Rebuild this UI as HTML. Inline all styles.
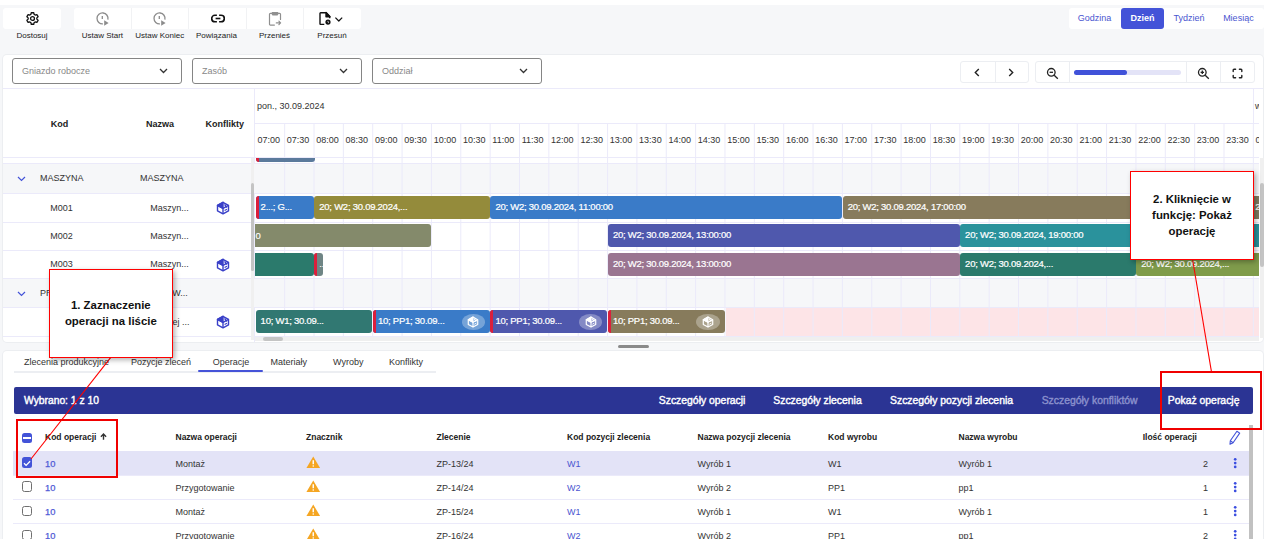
<!DOCTYPE html>
<html><head><meta charset="utf-8"><style>
html,body{margin:0;padding:0;}
body{width:1264px;height:552px;position:relative;overflow:hidden;background:#fff;font-family:'Liberation Sans', sans-serif;}
#bg{position:absolute;left:0;top:0;width:1264px;height:539px;background:#f6f7f9;}
</style></head><body><div id="bg"></div>
<div style="position:absolute;left:0px;top:0px;width:1264px;height:5px;background:#fff"></div>
<div style="position:absolute;left:3px;top:8px;width:58px;height:21px;background:#fff;border-radius:3px"></div>
<div style="position:absolute;left:74px;top:8px;width:287px;height:21px;background:#fff;border-radius:3px"></div>
<div style="position:absolute;left:130.5px;top:8px;width:1px;height:21px;background:#f1f2f4"></div>
<div style="position:absolute;left:187.5px;top:8px;width:1px;height:21px;background:#f1f2f4"></div>
<div style="position:absolute;left:245.5px;top:8px;width:1px;height:21px;background:#f1f2f4"></div>
<div style="position:absolute;left:302.5px;top:8px;width:1px;height:21px;background:#f1f2f4"></div>
<svg style="position:absolute;left:24.5px;top:10.5px" width="15" height="15" viewBox="0 0 24 24" fill="none" stroke="#111" stroke-width="2.1" stroke-linejoin="round">
<path d="M14.62 5.51 L13.95 2.81 L10.05 2.81 L9.38 5.51 L7.69 6.48 L5.01 5.71 L3.06 9.10 L5.07 11.03 L5.07 12.97 L3.06 14.90 L5.01 18.29 L7.69 17.52 L9.38 18.49 L10.05 21.19 L13.95 21.19 L14.62 18.49 L16.31 17.52 L18.99 18.29 L20.94 14.90 L18.93 12.97 L18.93 11.03 L20.94 9.10 L18.99 5.71 L16.31 6.48Z"/>
<circle cx="12" cy="12" r="3.1"/></svg>
<svg style="position:absolute;left:94.8px;top:11px" width="15" height="15" viewBox="0 0 15 15" fill="none" stroke="#8c8c8c" stroke-width="1.3">
<path d="M12.9 8.6A5.5 5.5 0 1 0 7.9 12.95"/><path d="M7.3 4.9v3.2"/><path d="M9.2 9.3l4.4 2.7-4.4 2.7z" fill="#8c8c8c" stroke="none"/></svg>
<svg style="position:absolute;left:152.0px;top:11px" width="15" height="15" viewBox="0 0 15 15" fill="none" stroke="#8c8c8c" stroke-width="1.3">
<path d="M12.9 8.6A5.5 5.5 0 1 0 7.9 12.95"/><path d="M7.3 4.9v3.2"/><path d="M9.2 9.3l4.4 2.7-4.4 2.7z" fill="#8c8c8c" stroke="none"/></svg>
<svg style="position:absolute;left:210.5px;top:13.6px" width="14" height="9" viewBox="0 0 14 9" fill="none" stroke="#111" stroke-width="1.6">
<path d="M5.9 1.3H3.9a3.2 3.2 0 0 0 0 6.4h2"/><path d="M8.1 1.3h2a3.2 3.2 0 0 1 0 6.4h-2"/><path d="M4.6 4.5h4.8"/></svg>
<svg style="position:absolute;left:268px;top:11px" width="14" height="15" viewBox="0 0 14 15" fill="none" stroke="#8f8f8f" stroke-width="1.2" stroke-linecap="round" stroke-linejoin="round">
<path d="M3.6 2.4H2.4a.9.9 0 0 0-.9.9v9.9a.9.9 0 0 0 .9.9h4"/><path d="M10.4 2.4h1.2a.9.9 0 0 1 .9.9v5.2"/><path d="M4.3 1.6h5.4v1.6a.8.8 0 0 1-.8.8H5.1a.8.8 0 0 1-.8-.8z" fill="#8f8f8f"/><path d="M8.3 11.9h4.2M10.9 10.2l1.7 1.7-1.7 1.7"/></svg>
<svg style="position:absolute;left:318px;top:11px" width="26" height="15" viewBox="0 0 26 15" fill="none" stroke="#111" stroke-width="1.4" stroke-linejoin="round">
<path d="M6.3 13.4H2.6a.6.6 0 0 1-.6-.6V2.4a.6.6 0 0 1 .6-.6h5.6l3.5 3.6v1.8"/><path d="M8 1.6v4.2h4z" fill="#111"/><circle cx="10" cy="11.1" r="2.6" fill="#111" stroke="none"/><path d="M10 9.9v1.3l.8.6" stroke="#fff" stroke-width="0.8"/><path d="M17.4 6.6l3.4 3.4 3.4-3.4" stroke-width="1.2"/></svg>
<div style="position:absolute;left:-168px;width:400px;text-align:center;top:30.0px;line-height:12px;font-size:8px;color:#222;font-weight:normal;white-space:nowrap;">Dostosuj</div>
<div style="position:absolute;left:-97.6px;width:400px;text-align:center;top:30.0px;line-height:12px;font-size:8px;color:#222;font-weight:normal;white-space:nowrap;">Ustaw Start</div>
<div style="position:absolute;left:-40.30000000000001px;width:400px;text-align:center;top:30.0px;line-height:12px;font-size:8px;color:#222;font-weight:normal;white-space:nowrap;">Ustaw Koniec</div>
<div style="position:absolute;left:16.5px;width:400px;text-align:center;top:30.0px;line-height:12px;font-size:8px;color:#222;font-weight:normal;white-space:nowrap;">Powiązania</div>
<div style="position:absolute;left:74.5px;width:400px;text-align:center;top:30.0px;line-height:12px;font-size:8px;color:#222;font-weight:normal;white-space:nowrap;">Przenieś</div>
<div style="position:absolute;left:132px;width:400px;text-align:center;top:30.0px;line-height:12px;font-size:8px;color:#222;font-weight:normal;white-space:nowrap;">Przesuń</div>
<div style="position:absolute;left:1069px;top:8px;width:195px;height:21px;background:#fff;border-radius:3px"></div>
<div style="position:absolute;left:1121px;top:8px;width:43px;height:21px;background:#4353d8;border-radius:3px"></div>
<div style="position:absolute;left:894.5px;width:400px;text-align:center;top:12.3px;line-height:12px;font-size:9px;color:#4a55d0;font-weight:normal;white-space:nowrap;">Godzina</div>
<div style="position:absolute;left:942.5px;width:400px;text-align:center;top:12.3px;line-height:12px;font-size:9px;color:#fff;font-weight:bold;white-space:nowrap;">Dzień</div>
<div style="position:absolute;left:989px;width:400px;text-align:center;top:12.3px;line-height:12px;font-size:9px;color:#4a55d0;font-weight:normal;white-space:nowrap;">Tydzień</div>
<div style="position:absolute;left:1038.4px;width:400px;text-align:center;top:12.3px;line-height:12px;font-size:9px;color:#4a55d0;font-weight:normal;white-space:nowrap;">Miesiąc</div>
<div style="position:absolute;left:3px;top:55px;width:1260px;height:287px;background:#fff;border-radius:4px;box-shadow:0 0 0 1px #eceef1"></div>
<div style="position:absolute;left:12px;top:58px;width:170px;height:26px;box-sizing:border-box;border:1px solid #858585;border-radius:3px"></div>
<div style="position:absolute;left:22px;top:65.2px;line-height:12px;font-size:9px;color:#888;font-weight:normal;white-space:nowrap;">Gniazdo robocze</div>
<svg style="position:absolute;left:159px;top:68px" width="9" height="6" viewBox="0 0 9 6" fill="none" stroke="#333" stroke-width="1.3"><path d="M1 1l3.5 3.5L8 1"/></svg>
<div style="position:absolute;left:192px;top:58px;width:170px;height:26px;box-sizing:border-box;border:1px solid #858585;border-radius:3px"></div>
<div style="position:absolute;left:202px;top:65.2px;line-height:12px;font-size:9px;color:#888;font-weight:normal;white-space:nowrap;">Zasób</div>
<svg style="position:absolute;left:339px;top:68px" width="9" height="6" viewBox="0 0 9 6" fill="none" stroke="#333" stroke-width="1.3"><path d="M1 1l3.5 3.5L8 1"/></svg>
<div style="position:absolute;left:372px;top:58px;width:170px;height:26px;box-sizing:border-box;border:1px solid #858585;border-radius:3px"></div>
<div style="position:absolute;left:382px;top:65.2px;line-height:12px;font-size:9px;color:#888;font-weight:normal;white-space:nowrap;">Oddział</div>
<svg style="position:absolute;left:519px;top:68px" width="9" height="6" viewBox="0 0 9 6" fill="none" stroke="#333" stroke-width="1.3"><path d="M1 1l3.5 3.5L8 1"/></svg>
<div style="position:absolute;left:960px;top:61.3px;width:69px;height:22px;box-sizing:border-box;border:1px solid #eceef2;border-radius:3px"></div>
<div style="position:absolute;left:994.5px;top:61.3px;width:1px;height:22px;background:#eceef2"></div>
<svg style="position:absolute;left:974px;top:68px" width="6" height="9" viewBox="0 0 6 9" fill="none" stroke="#222" stroke-width="1.4"><path d="M4.8 1L1.3 4.5 4.8 8"/></svg>
<svg style="position:absolute;left:1008px;top:68px" width="6" height="9" viewBox="0 0 6 9" fill="none" stroke="#222" stroke-width="1.4"><path d="M1.2 1l3.5 3.5L1.2 8"/></svg>
<div style="position:absolute;left:1034.5px;top:61.3px;width:220.5px;height:22px;box-sizing:border-box;border:1px solid #eceef2;border-radius:3px"></div>
<div style="position:absolute;left:1068.8px;top:61.3px;width:1px;height:22px;background:#eceef2"></div>
<div style="position:absolute;left:1186px;top:61.3px;width:1px;height:22px;background:#eceef2"></div>
<div style="position:absolute;left:1220px;top:61.3px;width:1px;height:22px;background:#eceef2"></div>
<div style="position:absolute;left:1074.2px;top:70.2px;width:107px;height:4.8px;background:#e3e3f7;border-radius:3px"></div>
<div style="position:absolute;left:1074.2px;top:70.2px;width:53px;height:4.8px;background:#4052d9;border-radius:3px"></div>
<svg style="position:absolute;left:1045.5px;top:66.5px" width="13" height="13" viewBox="0 0 13 13" fill="none" stroke="#222" stroke-width="1.3"><circle cx="5.3" cy="5.3" r="3.8"/><path d="M8.2 8.2l3.6 3.6"/><path d="M3.6 5.3h3.4"/></svg>
<svg style="position:absolute;left:1197px;top:66.5px" width="13" height="13" viewBox="0 0 13 13" fill="none" stroke="#222" stroke-width="1.3"><circle cx="5.3" cy="5.3" r="3.8"/><path d="M8.2 8.2l3.6 3.6"/><path d="M3.6 5.3h3.4M5.3 3.6v3.4"/></svg>
<svg style="position:absolute;left:1231.7px;top:68px" width="11" height="11" viewBox="0 0 11 11" fill="none" stroke="#222" stroke-width="1.4" stroke-linecap="round" stroke-linejoin="round"><path d="M1.2 3.6V2a.8.8 0 0 1 .8-.8h1.6M7.4 1.2H9a.8.8 0 0 1 .8.8v1.6M9.8 7.4V9a.8.8 0 0 1-.8.8H7.4M3.6 9.8H2a.8.8 0 0 1-.8-.8V7.4"/></svg>
<div style="position:absolute;left:3px;top:88px;width:1260px;height:1px;background:#ebeafa"></div>
<div style="position:absolute;left:254px;top:88px;width:1px;height:254px;background:#ebeafa"></div>
<div style="position:absolute;left:-140.5px;width:400px;text-align:center;top:117.5px;line-height:12px;font-size:9px;color:#222;font-weight:bold;white-space:nowrap;">Kod</div>
<div style="position:absolute;left:-40px;width:400px;text-align:center;top:117.5px;line-height:12px;font-size:9px;color:#222;font-weight:bold;white-space:nowrap;">Nazwa</div>
<div style="position:absolute;left:24.69999999999999px;width:400px;text-align:center;top:117.5px;line-height:12px;font-size:9px;color:#222;font-weight:bold;white-space:nowrap;">Konflikty</div>
<div style="position:absolute;left:257px;top:100.4px;line-height:12px;font-size:9px;color:#333;font-weight:normal;white-space:nowrap;">pon., 30.09.2024</div>
<div style="position:absolute;left:254px;top:123px;width:1005px;height:1px;background:#ebeafa"></div>
<div style="position:absolute;left:1253px;top:88px;width:1px;height:35px;background:#ebeafa"></div>
<div style="position:absolute;left:1254px;top:88px;width:4.5px;height:70px;overflow:hidden">
<div style="position:absolute;left:1px;top:12.400000000000006px;line-height:12px;font-size:9px;color:#333;font-weight:normal;white-space:nowrap;">w</div>
<div style="position:absolute;left:1.556400000000167px;top:46.400000000000006px;line-height:12px;font-size:9px;color:#333;font-weight:normal;white-space:nowrap;">00:00</div>
</div>
<div style="position:absolute;left:257.5px;top:134.4px;line-height:12px;font-size:9px;color:#333;font-weight:normal;white-space:nowrap;">07:00</div>
<div style="position:absolute;left:286.8546px;top:134.4px;line-height:12px;font-size:9px;color:#333;font-weight:normal;white-space:nowrap;">07:30</div>
<div style="position:absolute;left:316.2092px;top:134.4px;line-height:12px;font-size:9px;color:#333;font-weight:normal;white-space:nowrap;">08:00</div>
<div style="position:absolute;left:345.5638px;top:134.4px;line-height:12px;font-size:9px;color:#333;font-weight:normal;white-space:nowrap;">08:30</div>
<div style="position:absolute;left:374.9184px;top:134.4px;line-height:12px;font-size:9px;color:#333;font-weight:normal;white-space:nowrap;">09:00</div>
<div style="position:absolute;left:404.27299999999997px;top:134.4px;line-height:12px;font-size:9px;color:#333;font-weight:normal;white-space:nowrap;">09:30</div>
<div style="position:absolute;left:433.6276px;top:134.4px;line-height:12px;font-size:9px;color:#333;font-weight:normal;white-space:nowrap;">10:00</div>
<div style="position:absolute;left:462.9822px;top:134.4px;line-height:12px;font-size:9px;color:#333;font-weight:normal;white-space:nowrap;">10:30</div>
<div style="position:absolute;left:492.3368px;top:134.4px;line-height:12px;font-size:9px;color:#333;font-weight:normal;white-space:nowrap;">11:00</div>
<div style="position:absolute;left:521.6914px;top:134.4px;line-height:12px;font-size:9px;color:#333;font-weight:normal;white-space:nowrap;">11:30</div>
<div style="position:absolute;left:551.046px;top:134.4px;line-height:12px;font-size:9px;color:#333;font-weight:normal;white-space:nowrap;">12:00</div>
<div style="position:absolute;left:580.4006px;top:134.4px;line-height:12px;font-size:9px;color:#333;font-weight:normal;white-space:nowrap;">12:30</div>
<div style="position:absolute;left:609.7552000000001px;top:134.4px;line-height:12px;font-size:9px;color:#333;font-weight:normal;white-space:nowrap;">13:00</div>
<div style="position:absolute;left:639.1098000000001px;top:134.4px;line-height:12px;font-size:9px;color:#333;font-weight:normal;white-space:nowrap;">13:30</div>
<div style="position:absolute;left:668.4644000000001px;top:134.4px;line-height:12px;font-size:9px;color:#333;font-weight:normal;white-space:nowrap;">14:00</div>
<div style="position:absolute;left:697.8190000000001px;top:134.4px;line-height:12px;font-size:9px;color:#333;font-weight:normal;white-space:nowrap;">14:30</div>
<div style="position:absolute;left:727.1736000000001px;top:134.4px;line-height:12px;font-size:9px;color:#333;font-weight:normal;white-space:nowrap;">15:00</div>
<div style="position:absolute;left:756.5282000000001px;top:134.4px;line-height:12px;font-size:9px;color:#333;font-weight:normal;white-space:nowrap;">15:30</div>
<div style="position:absolute;left:785.8828000000001px;top:134.4px;line-height:12px;font-size:9px;color:#333;font-weight:normal;white-space:nowrap;">16:00</div>
<div style="position:absolute;left:815.2374px;top:134.4px;line-height:12px;font-size:9px;color:#333;font-weight:normal;white-space:nowrap;">16:30</div>
<div style="position:absolute;left:844.5920000000001px;top:134.4px;line-height:12px;font-size:9px;color:#333;font-weight:normal;white-space:nowrap;">17:00</div>
<div style="position:absolute;left:873.9466px;top:134.4px;line-height:12px;font-size:9px;color:#333;font-weight:normal;white-space:nowrap;">17:30</div>
<div style="position:absolute;left:903.3012000000001px;top:134.4px;line-height:12px;font-size:9px;color:#333;font-weight:normal;white-space:nowrap;">18:00</div>
<div style="position:absolute;left:932.6558px;top:134.4px;line-height:12px;font-size:9px;color:#333;font-weight:normal;white-space:nowrap;">18:30</div>
<div style="position:absolute;left:962.0104000000001px;top:134.4px;line-height:12px;font-size:9px;color:#333;font-weight:normal;white-space:nowrap;">19:00</div>
<div style="position:absolute;left:991.365px;top:134.4px;line-height:12px;font-size:9px;color:#333;font-weight:normal;white-space:nowrap;">19:30</div>
<div style="position:absolute;left:1020.7196000000001px;top:134.4px;line-height:12px;font-size:9px;color:#333;font-weight:normal;white-space:nowrap;">20:00</div>
<div style="position:absolute;left:1050.0742px;top:134.4px;line-height:12px;font-size:9px;color:#333;font-weight:normal;white-space:nowrap;">20:30</div>
<div style="position:absolute;left:1079.4288000000001px;top:134.4px;line-height:12px;font-size:9px;color:#333;font-weight:normal;white-space:nowrap;">21:00</div>
<div style="position:absolute;left:1108.7834px;top:134.4px;line-height:12px;font-size:9px;color:#333;font-weight:normal;white-space:nowrap;">21:30</div>
<div style="position:absolute;left:1138.1380000000001px;top:134.4px;line-height:12px;font-size:9px;color:#333;font-weight:normal;white-space:nowrap;">22:00</div>
<div style="position:absolute;left:1167.4926px;top:134.4px;line-height:12px;font-size:9px;color:#333;font-weight:normal;white-space:nowrap;">22:30</div>
<div style="position:absolute;left:1196.8472000000002px;top:134.4px;line-height:12px;font-size:9px;color:#333;font-weight:normal;white-space:nowrap;">23:00</div>
<div style="position:absolute;left:1226.2018px;top:134.4px;line-height:12px;font-size:9px;color:#333;font-weight:normal;white-space:nowrap;">23:30</div>
<div style="position:absolute;left:3px;top:157px;width:1256px;height:1px;background:#ebeafa"></div>
<div style="position:absolute;left:3px;top:163px;width:1256px;height:30px;background:#f6f7f9"></div>
<div style="position:absolute;left:3px;top:278px;width:1256px;height:29px;background:#f6f7f9"></div>
<div style="position:absolute;left:726px;top:307px;width:533px;height:29px;background:#fde4e7"></div>
<div style="position:absolute;left:3px;top:163px;width:1256px;height:1px;background:#ebeafa"></div>
<div style="position:absolute;left:3px;top:193px;width:1256px;height:1px;background:#ebeafa"></div>
<div style="position:absolute;left:3px;top:222px;width:1256px;height:1px;background:#ebeafa"></div>
<div style="position:absolute;left:3px;top:250px;width:1256px;height:1px;background:#ebeafa"></div>
<div style="position:absolute;left:3px;top:278px;width:1256px;height:1px;background:#ebeafa"></div>
<div style="position:absolute;left:3px;top:307px;width:1256px;height:1px;background:#ebeafa"></div>
<div style="position:absolute;left:3px;top:336px;width:1256px;height:1px;background:#ebeafa"></div>
<svg style="position:absolute;left:0;top:0" width="1264" height="552"><rect x="284.15" y="123" width="1" height="213" fill="#ebeafa"/><rect x="313.51" y="123" width="1" height="213" fill="#ebeafa"/><rect x="342.86" y="123" width="1" height="213" fill="#ebeafa"/><rect x="372.22" y="123" width="1" height="213" fill="#ebeafa"/><rect x="401.57" y="123" width="1" height="213" fill="#ebeafa"/><rect x="430.93" y="123" width="1" height="213" fill="#ebeafa"/><rect x="460.28" y="123" width="1" height="213" fill="#ebeafa"/><rect x="489.64" y="123" width="1" height="213" fill="#ebeafa"/><rect x="518.99" y="123" width="1" height="213" fill="#ebeafa"/><rect x="548.35" y="123" width="1" height="213" fill="#ebeafa"/><rect x="577.70" y="123" width="1" height="213" fill="#ebeafa"/><rect x="607.06" y="123" width="1" height="213" fill="#ebeafa"/><rect x="636.41" y="123" width="1" height="213" fill="#ebeafa"/><rect x="665.76" y="123" width="1" height="213" fill="#ebeafa"/><rect x="695.12" y="123" width="1" height="213" fill="#ebeafa"/><rect x="724.47" y="123" width="1" height="213" fill="#ebeafa"/><rect x="753.83" y="123" width="1" height="213" fill="#ebeafa"/><rect x="783.18" y="123" width="1" height="213" fill="#ebeafa"/><rect x="812.54" y="123" width="1" height="213" fill="#ebeafa"/><rect x="841.89" y="123" width="1" height="213" fill="#ebeafa"/><rect x="871.25" y="123" width="1" height="213" fill="#ebeafa"/><rect x="900.60" y="123" width="1" height="213" fill="#ebeafa"/><rect x="929.96" y="123" width="1" height="213" fill="#ebeafa"/><rect x="959.31" y="123" width="1" height="213" fill="#ebeafa"/><rect x="988.66" y="123" width="1" height="213" fill="#ebeafa"/><rect x="1018.02" y="123" width="1" height="213" fill="#ebeafa"/><rect x="1047.37" y="123" width="1" height="213" fill="#ebeafa"/><rect x="1076.73" y="123" width="1" height="213" fill="#ebeafa"/><rect x="1106.08" y="123" width="1" height="213" fill="#ebeafa"/><rect x="1135.44" y="123" width="1" height="213" fill="#ebeafa"/><rect x="1164.79" y="123" width="1" height="213" fill="#ebeafa"/><rect x="1194.15" y="123" width="1" height="213" fill="#ebeafa"/><rect x="1223.50" y="123" width="1" height="213" fill="#ebeafa"/><rect x="1252.86" y="123" width="1" height="213" fill="#ebeafa"/></svg>
<svg style="position:absolute;left:16.8px;top:175.5px" width="9" height="6" viewBox="0 0 9 6" fill="none" stroke="#4353d8" stroke-width="1.2"><path d="M1 1l3.5 3.5L8 1"/></svg>
<div style="position:absolute;left:40px;top:172.3px;line-height:12px;font-size:9px;color:#333;font-weight:normal;white-space:nowrap;">MASZYNA</div>
<div style="position:absolute;left:140px;top:172.3px;line-height:12px;font-size:9px;color:#333;font-weight:normal;white-space:nowrap;">MASZYNA</div>
<div style="position:absolute;left:50.3px;top:201.5px;line-height:12px;font-size:9px;color:#333;font-weight:normal;white-space:nowrap;">M001</div>
<div style="position:absolute;left:150.3px;top:201.5px;line-height:12px;font-size:9px;color:#333;font-weight:normal;white-space:nowrap;">Maszyn...</div>
<div style="position:absolute;left:50.3px;top:230.0px;line-height:12px;font-size:9px;color:#333;font-weight:normal;white-space:nowrap;">M002</div>
<div style="position:absolute;left:150.3px;top:230.0px;line-height:12px;font-size:9px;color:#333;font-weight:normal;white-space:nowrap;">Maszyn...</div>
<div style="position:absolute;left:50.3px;top:258.0px;line-height:12px;font-size:9px;color:#333;font-weight:normal;white-space:nowrap;">M003</div>
<div style="position:absolute;left:150.3px;top:258.0px;line-height:12px;font-size:9px;color:#333;font-weight:normal;white-space:nowrap;">Maszyn...</div>
<svg style="position:absolute;left:16.8px;top:290.5px" width="9" height="6" viewBox="0 0 9 6" fill="none" stroke="#4353d8" stroke-width="1.2"><path d="M1 1l3.5 3.5L8 1"/></svg>
<div style="position:absolute;left:40px;top:287.0px;line-height:12px;font-size:9px;color:#333;font-weight:normal;white-space:nowrap;">PR</div>
<div style="position:absolute;left:172.3px;top:287.0px;line-height:12px;font-size:9px;color:#333;font-weight:normal;white-space:nowrap;">W...</div>
<div style="position:absolute;left:172.6px;top:316.0px;line-height:12px;font-size:9px;color:#333;font-weight:normal;white-space:nowrap;">ej ...</div>
<svg style="position:absolute;left:216.3px;top:200.5px" width="14" height="14" viewBox="0 0 14 14" fill="none" stroke="#3a40c8" stroke-width="1.4" stroke-linejoin="round">
<path d="M7 1.3L12.5 4.3V9.9L7 12.9 1.5 9.9V4.3z"/><path d="M1.5 4.3L7 7.3V12.9"/><path d="M1.5 4.3L7 1.3V7.3z" fill="#3a40c8"/><path d="M7 7.3L12.5 4.3M8.6 3.4l2.2 3.3" /><path d="M8.6 9.6l2.4-1.3" stroke-width="1.1"/></svg>
<svg style="position:absolute;left:216.3px;top:257.5px" width="14" height="14" viewBox="0 0 14 14" fill="none" stroke="#3a40c8" stroke-width="1.4" stroke-linejoin="round">
<path d="M7 1.3L12.5 4.3V9.9L7 12.9 1.5 9.9V4.3z"/><path d="M1.5 4.3L7 7.3V12.9"/><path d="M1.5 4.3L7 1.3V7.3z" fill="#3a40c8"/><path d="M7 7.3L12.5 4.3M8.6 3.4l2.2 3.3" /><path d="M8.6 9.6l2.4-1.3" stroke-width="1.1"/></svg>
<svg style="position:absolute;left:216.3px;top:315.0px" width="14" height="14" viewBox="0 0 14 14" fill="none" stroke="#3a40c8" stroke-width="1.4" stroke-linejoin="round">
<path d="M7 1.3L12.5 4.3V9.9L7 12.9 1.5 9.9V4.3z"/><path d="M1.5 4.3L7 7.3V12.9"/><path d="M1.5 4.3L7 1.3V7.3z" fill="#3a40c8"/><path d="M7 7.3L12.5 4.3M8.6 3.4l2.2 3.3" /><path d="M8.6 9.6l2.4-1.3" stroke-width="1.1"/></svg>
<div style="position:absolute;left:250.5px;top:158px;width:3.5px;height:182px;background:#f0f0f0"></div>
<div style="position:absolute;left:250.5px;top:183.4px;width:3.5px;height:88px;background:#c4c4c4;border-radius:2px"></div>
<div style="position:absolute;left:1259.5px;top:158px;width:4px;height:180px;background:#f0f0f0"></div>
<div style="position:absolute;left:1259.5px;top:183px;width:4px;height:84px;background:#c4c4c4;border-radius:2px"></div>
<div style="position:absolute;left:255px;top:336.9px;width:1004px;height:4.6px;background:#efefef"></div>
<div style="position:absolute;left:263px;top:336.9px;width:20px;height:3.8px;background:#c4c4c4;border-radius:2px"></div>
<div style="position:absolute;left:0;top:0;width:1264px;height:552px;clip-path:inset(157px 5px 215px 255px)">
<div style="position:absolute;left:255.5px;top:157.5px;width:59px;height:4.2px;background:#5b7a9c;border-radius:0 0 3px 3px;overflow:hidden"><div style="position:absolute;left:0;top:0;width:3px;height:4px;background:#db1f3c"></div></div>
<div style="position:absolute;left:255.6px;top:195.7px;width:58.1px;height:23px;background:#3a7bc8;border-radius:3px;overflow:hidden"><div style="position:absolute;left:0;top:0;bottom:0;width:3px;background:#db1f3c"></div><div style="position:absolute;left:5px;top:-0.8px;line-height:23px;font-size:9.5px;letter-spacing:-0.25px;-webkit-text-stroke:0.22px #fff;color:#fff;white-space:nowrap;">2...; G...</div></div>
<div style="position:absolute;left:314.3px;top:195.7px;width:175.5px;height:23px;background:#948b3b;border-radius:3px;overflow:hidden"><div style="position:absolute;left:5px;top:-0.8px;line-height:23px;font-size:9.5px;letter-spacing:-0.25px;-webkit-text-stroke:0.22px #fff;color:#fff;white-space:nowrap;">20; W2; 30.09.2024,...</div></div>
<div style="position:absolute;left:490.4px;top:195.7px;width:351.7px;height:23px;background:#3a7bc8;border-radius:3px;overflow:hidden"><div style="position:absolute;left:5px;top:-0.8px;line-height:23px;font-size:9.5px;letter-spacing:-0.25px;-webkit-text-stroke:0.22px #fff;color:#fff;white-space:nowrap;">20; W2; 30.09.2024, 11:00:00</div></div>
<div style="position:absolute;left:842.7px;top:195.7px;width:406.9px;height:23px;background:#877b5c;border-radius:3px;overflow:hidden"><div style="position:absolute;left:5px;top:-0.8px;line-height:23px;font-size:9.5px;letter-spacing:-0.25px;-webkit-text-stroke:0.22px #fff;color:#fff;white-space:nowrap;">20; W2; 30.09.2024, 17:00:00</div></div>
<div style="position:absolute;left:1250.2px;top:195.7px;width:61.6px;height:23px;background:#807b60;border-radius:3px;overflow:hidden"><div style="position:absolute;left:5px;top:-0.8px;line-height:23px;font-size:9.5px;letter-spacing:-0.25px;-webkit-text-stroke:0.22px #fff;color:#fff;white-space:nowrap;">20; W2; 30.09.2024,...</div></div>
<div style="position:absolute;left:240.0px;top:224px;width:191.1px;height:23px;background:#848a6b;border-radius:3px;overflow:hidden"></div>
<div style="position:absolute;left:255.6px;top:229.5px;line-height:12px;font-size:9.5px;color:#fff;font-weight:normal;white-space:nowrap;-webkit-text-stroke:0.15px #fff">0</div>
<div style="position:absolute;left:607.9px;top:224px;width:351.7px;height:23px;background:#4f58ad;border-radius:3px;overflow:hidden"><div style="position:absolute;left:5px;top:-0.8px;line-height:23px;font-size:9.5px;letter-spacing:-0.25px;-webkit-text-stroke:0.22px #fff;color:#fff;white-space:nowrap;">20; W2; 30.09.2024, 13:00:00</div></div>
<div style="position:absolute;left:960.1px;top:224px;width:351.7px;height:23px;background:#2a929c;border-radius:3px;overflow:hidden"><div style="position:absolute;left:5px;top:-0.8px;line-height:23px;font-size:9.5px;letter-spacing:-0.25px;-webkit-text-stroke:0.22px #fff;color:#fff;white-space:nowrap;">20; W2; 30.09.2024, 19:00:00</div></div>
<div style="position:absolute;left:240.0px;top:253px;width:73.7px;height:23px;background:#2b7a6c;border-radius:3px;overflow:hidden"></div>
<div style="position:absolute;left:314.3px;top:253px;width:9.1px;height:23px;background:#6f8585;border-radius:3px;overflow:hidden"><div style="position:absolute;left:0;top:0;bottom:0;width:3px;background:#db1f3c"></div><div style="position:absolute;left:5px;top:-0.8px;line-height:23px;font-size:9.5px;letter-spacing:-0.25px;-webkit-text-stroke:0.22px #fff;color:#fff;white-space:nowrap;">...</div></div>
<div style="position:absolute;left:607.9px;top:253px;width:351.7px;height:23px;background:#9a7591;border-radius:3px;overflow:hidden"><div style="position:absolute;left:5px;top:-0.8px;line-height:23px;font-size:9.5px;letter-spacing:-0.25px;-webkit-text-stroke:0.22px #fff;color:#fff;white-space:nowrap;">20; W2; 30.09.2024, 13:00:00</div></div>
<div style="position:absolute;left:960.1px;top:253px;width:175.5px;height:23px;background:#2b7a6c;border-radius:3px;overflow:hidden"><div style="position:absolute;left:5px;top:-0.8px;line-height:23px;font-size:9.5px;letter-spacing:-0.25px;-webkit-text-stroke:0.22px #fff;color:#fff;white-space:nowrap;">20; W2; 30.09.2024,...</div></div>
<div style="position:absolute;left:1136.2px;top:253px;width:175.5px;height:23px;background:#7f9b4b;border-radius:3px;overflow:hidden"><div style="position:absolute;left:5px;top:-0.8px;line-height:23px;font-size:9.5px;letter-spacing:-0.25px;-webkit-text-stroke:0.22px #fff;color:#fff;white-space:nowrap;">20; W2; 30.09.2024,...</div></div>
<div style="position:absolute;left:255.6px;top:310px;width:116.8px;height:23px;background:#317872;border-radius:3px;overflow:hidden"><div style="position:absolute;left:5px;top:-0.8px;line-height:23px;font-size:9.5px;letter-spacing:-0.25px;-webkit-text-stroke:0.22px #fff;color:#fff;white-space:nowrap;">10; W1; 30.09...</div></div>
<div style="position:absolute;left:373.0px;top:310px;width:116.8px;height:23px;background:#3a7bc8;border-radius:3px;overflow:hidden"><div style="position:absolute;left:0;top:0;bottom:0;width:3px;background:#db1f3c"></div><div style="position:absolute;left:5px;top:-0.8px;line-height:23px;font-size:9.5px;letter-spacing:-0.25px;-webkit-text-stroke:0.22px #fff;color:#fff;white-space:nowrap;">10; PP1; 30.09...</div></div>
<div style="position:absolute;left:461.5px;top:313.8px;width:23.4px;height:15.8px;border-radius:50%;background:rgba(255,255,255,0.3)"></div>
<svg style="position:absolute;left:467.23679999999996px;top:315.5px" width="12" height="12" viewBox="0 0 14 14" fill="none" stroke="#fff" stroke-width="1.4" stroke-linejoin="round">
<path d="M7 1.3L12.5 4.3V9.9L7 12.9 1.5 9.9V4.3z"/><path d="M1.5 4.3L7 7.3V12.9"/><path d="M1.5 4.3L7 1.3V7.3z" fill="#fff"/><path d="M7 7.3L12.5 4.3M8.6 3.4l2.2 3.3" /><path d="M8.6 9.6l2.4-1.3" stroke-width="1.1"/></svg>
<div style="position:absolute;left:490.4px;top:310px;width:116.8px;height:23px;background:#4f58ad;border-radius:3px;overflow:hidden"><div style="position:absolute;left:0;top:0;bottom:0;width:3px;background:#db1f3c"></div><div style="position:absolute;left:5px;top:-0.8px;line-height:23px;font-size:9.5px;letter-spacing:-0.25px;-webkit-text-stroke:0.22px #fff;color:#fff;white-space:nowrap;">10; PP1; 30.09...</div></div>
<div style="position:absolute;left:579.0px;top:313.8px;width:23.4px;height:15.8px;border-radius:50%;background:rgba(255,255,255,0.3)"></div>
<svg style="position:absolute;left:584.6552px;top:315.5px" width="12" height="12" viewBox="0 0 14 14" fill="none" stroke="#fff" stroke-width="1.4" stroke-linejoin="round">
<path d="M7 1.3L12.5 4.3V9.9L7 12.9 1.5 9.9V4.3z"/><path d="M1.5 4.3L7 7.3V12.9"/><path d="M1.5 4.3L7 1.3V7.3z" fill="#fff"/><path d="M7 7.3L12.5 4.3M8.6 3.4l2.2 3.3" /><path d="M8.6 9.6l2.4-1.3" stroke-width="1.1"/></svg>
<div style="position:absolute;left:607.9px;top:310px;width:116.8px;height:23px;background:#877b5c;border-radius:3px;overflow:hidden"><div style="position:absolute;left:0;top:0;bottom:0;width:3px;background:#db1f3c"></div><div style="position:absolute;left:5px;top:-0.8px;line-height:23px;font-size:9.5px;letter-spacing:-0.25px;-webkit-text-stroke:0.22px #fff;color:#fff;white-space:nowrap;">10; PP1; 30.09...</div></div>
<div style="position:absolute;left:696.4px;top:313.8px;width:23.4px;height:15.8px;border-radius:50%;background:rgba(255,255,255,0.3)"></div>
<svg style="position:absolute;left:702.0736px;top:315.5px" width="12" height="12" viewBox="0 0 14 14" fill="none" stroke="#fff" stroke-width="1.4" stroke-linejoin="round">
<path d="M7 1.3L12.5 4.3V9.9L7 12.9 1.5 9.9V4.3z"/><path d="M1.5 4.3L7 7.3V12.9"/><path d="M1.5 4.3L7 1.3V7.3z" fill="#fff"/><path d="M7 7.3L12.5 4.3M8.6 3.4l2.2 3.3" /><path d="M8.6 9.6l2.4-1.3" stroke-width="1.1"/></svg>
</div>
<div style="position:absolute;left:618px;top:345.2px;width:30.5px;height:2.8px;background:#8a8a8a;border-radius:2px"></div>
<div style="position:absolute;left:3px;top:351px;width:1260px;height:188px;background:#fff;border-radius:4px 4px 0 0;box-shadow:0 0 0 1px #eceef1"></div>
<div style="position:absolute;left:14px;top:371px;width:422px;height:1.5px;background:#eceef2"></div>
<div style="position:absolute;left:198.2px;top:370px;width:64.7px;height:2.4px;background:#4553d8;border-radius:1px"></div>
<div style="position:absolute;left:24px;top:356.1px;line-height:12px;font-size:9px;color:#333;font-weight:normal;white-space:nowrap;">Zlecenia produkcyjne</div>
<div style="position:absolute;left:131px;top:356.1px;line-height:12px;font-size:9px;color:#333;font-weight:normal;white-space:nowrap;">Pozycje zleceń</div>
<div style="position:absolute;left:212.7px;top:356.1px;line-height:12px;font-size:9px;color:#333;font-weight:normal;white-space:nowrap;">Operacje</div>
<div style="position:absolute;left:270.4px;top:356.1px;line-height:12px;font-size:9px;color:#333;font-weight:normal;white-space:nowrap;">Materiały</div>
<div style="position:absolute;left:333px;top:356.1px;line-height:12px;font-size:9px;color:#333;font-weight:normal;white-space:nowrap;">Wyroby</div>
<div style="position:absolute;left:389px;top:356.1px;line-height:12px;font-size:9px;color:#333;font-weight:normal;white-space:nowrap;">Konflikty</div>
<div style="position:absolute;left:14px;top:387.4px;width:1238.7px;height:26.6px;background:#2b3494;border-radius:2px"></div>
<div style="position:absolute;left:24px;top:394.9px;line-height:12px;font-size:10.3px;color:#fff;font-weight:normal;white-space:nowrap;-webkit-text-stroke:0.4px #fff">Wybrano: 1 z 10</div>
<div style="position:absolute;left:658.8px;top:394.9px;line-height:12px;font-size:10.4px;color:#fff;font-weight:normal;white-space:nowrap;-webkit-text-stroke:0.4px #fff">Szczegóły operacji</div>
<div style="position:absolute;left:773.3px;top:394.9px;line-height:12px;font-size:10.4px;color:#fff;font-weight:normal;white-space:nowrap;-webkit-text-stroke:0.4px #fff">Szczegóły zlecenia</div>
<div style="position:absolute;left:890px;top:394.9px;line-height:12px;font-size:10.4px;color:#fff;font-weight:normal;white-space:nowrap;-webkit-text-stroke:0.4px #fff">Szczegóły pozycji zlecenia</div>
<div style="position:absolute;left:1041.7px;top:394.9px;line-height:12px;font-size:10.4px;color:#8a90cc;font-weight:normal;white-space:nowrap;-webkit-text-stroke:0.4px #8a90cc">Szczegóły konfliktów</div>
<div style="position:absolute;left:1167.8px;top:394.9px;line-height:12px;font-size:10.4px;color:#fff;font-weight:normal;white-space:nowrap;-webkit-text-stroke:0.4px #fff">Pokaż operację</div>
<div style="position:absolute;left:45px;top:430.5px;line-height:12px;font-size:8.5px;color:#222;font-weight:bold;white-space:nowrap;">Kod operacji</div>
<div style="position:absolute;left:175.5px;top:430.5px;line-height:12px;font-size:8.5px;color:#222;font-weight:bold;white-space:nowrap;">Nazwa operacji</div>
<div style="position:absolute;left:306px;top:430.5px;line-height:12px;font-size:8.5px;color:#222;font-weight:bold;white-space:nowrap;">Znacznik</div>
<div style="position:absolute;left:436.5px;top:430.5px;line-height:12px;font-size:8.5px;color:#222;font-weight:bold;white-space:nowrap;">Zlecenie</div>
<div style="position:absolute;left:567px;top:430.5px;line-height:12px;font-size:8.5px;color:#222;font-weight:bold;white-space:nowrap;">Kod pozycji zlecenia</div>
<div style="position:absolute;left:697.5px;top:430.5px;line-height:12px;font-size:8.5px;color:#222;font-weight:bold;white-space:nowrap;">Nazwa pozycji zlecenia</div>
<div style="position:absolute;left:828px;top:430.5px;line-height:12px;font-size:8.5px;color:#222;font-weight:bold;white-space:nowrap;">Kod wyrobu</div>
<div style="position:absolute;left:958.5px;top:430.5px;line-height:12px;font-size:8.5px;color:#222;font-weight:bold;white-space:nowrap;">Nazwa wyrobu</div>
<svg style="position:absolute;left:100.3px;top:433px" width="7" height="7" viewBox="0 0 7 7" fill="none" stroke="#333" stroke-width="1.4"><path d="M3.5 6.8V1.2M0.9 3.7L3.5 1.1 6.1 3.7"/></svg>
<div style="position:absolute;left:797px;width:400px;text-align:right;top:430.5px;line-height:12px;font-size:8.5px;color:#222;font-weight:bold;white-space:nowrap;">Ilość operacji</div>
<div style="position:absolute;left:22px;top:432.8px;width:10px;height:10px;background:#4353d8;border-radius:2.5px"></div>
<div style="position:absolute;left:23.2px;top:437px;width:7.6px;height:1.7px;background:#fff"></div>
<svg style="position:absolute;left:1228px;top:429.5px" width="14" height="16" viewBox="0 0 14 16" fill="none" stroke="#4353d8" stroke-width="1.1" stroke-linejoin="round"><path d="M8.9 1.24L11.7 3.16 5.1 12.7 2.0 14.3 2.3 10.8Z"/><path d="M2.3 10.8L5.1 12.7"/></svg>
<div style="position:absolute;left:13.4px;top:451px;width:1235.6px;height:23.600000000000023px;background:#e3e3f7"></div>
<div style="position:absolute;left:13.4px;top:474.6px;width:1235.6px;height:1px;background:#ebeafa"></div>
<div style="position:absolute;left:13.4px;top:499px;width:1235.6px;height:1px;background:#ebeafa"></div>
<div style="position:absolute;left:13.4px;top:523px;width:1235.6px;height:1px;background:#ebeafa"></div>
<div style="position:absolute;left:21.8px;top:457.40000000000003px;width:10.4px;height:10.6px;background:#4353d8;border-radius:2.5px"></div>
<svg style="position:absolute;left:22px;top:457.6px" width="10" height="10" viewBox="0 0 10 10" fill="none" stroke="#fff" stroke-width="1.3"><path d="M2 5.3l2.1 2.1 4-4.2"/></svg>
<div style="position:absolute;left:45px;top:457.5px;line-height:12px;font-size:9.3px;color:#4f5ad6;font-weight:normal;white-space:nowrap;-webkit-text-stroke:0.25px #4f5ad6">10</div>
<div style="position:absolute;left:175.5px;top:457.5px;line-height:12px;font-size:9px;color:#333;font-weight:normal;white-space:nowrap;">Montaż</div>
<svg style="position:absolute;left:306px;top:456.1px" width="14.5" height="12.5" viewBox="0 0 14 12"><path d="M7 0.5L13.6 11.5H0.4z" fill="#f5a623"/><path d="M7 4v4" stroke="#fff" stroke-width="1.4"/><circle cx="7" cy="9.6" r="0.8" fill="#fff"/></svg>
<div style="position:absolute;left:436.5px;top:457.5px;line-height:12px;font-size:9px;color:#333;font-weight:normal;white-space:nowrap;">ZP-13/24</div>
<div style="position:absolute;left:567px;top:457.5px;line-height:12px;font-size:9px;color:#4a55d0;font-weight:normal;white-space:nowrap;">W1</div>
<div style="position:absolute;left:697.5px;top:457.5px;line-height:12px;font-size:9px;color:#333;font-weight:normal;white-space:nowrap;">Wyrób 1</div>
<div style="position:absolute;left:828px;top:457.5px;line-height:12px;font-size:9px;color:#333;font-weight:normal;white-space:nowrap;">W1</div>
<div style="position:absolute;left:958.5px;top:457.5px;line-height:12px;font-size:9px;color:#333;font-weight:normal;white-space:nowrap;">Wyrób 1</div>
<div style="position:absolute;left:808px;width:400px;text-align:right;top:457.5px;line-height:12px;font-size:9px;color:#333;font-weight:normal;white-space:nowrap;">2</div>
<svg style="position:absolute;left:1232px;top:456.8px" width="6" height="12" viewBox="0 0 6 12" fill="#3a4de0"><circle cx="3.2" cy="2.3" r="1.35"/><circle cx="3.2" cy="6.1" r="1.35"/><circle cx="3.2" cy="9.9" r="1.35"/></svg>
<div style="position:absolute;left:21.8px;top:481.40000000000003px;width:10.4px;height:10.6px;box-sizing:border-box;border:1.3px solid #6f6f6f;border-radius:2.5px"></div>
<div style="position:absolute;left:45px;top:481.5px;line-height:12px;font-size:9.3px;color:#4f5ad6;font-weight:normal;white-space:nowrap;-webkit-text-stroke:0.25px #4f5ad6">10</div>
<div style="position:absolute;left:175.5px;top:481.5px;line-height:12px;font-size:9px;color:#333;font-weight:normal;white-space:nowrap;">Przygotowanie</div>
<svg style="position:absolute;left:306px;top:480.1px" width="14.5" height="12.5" viewBox="0 0 14 12"><path d="M7 0.5L13.6 11.5H0.4z" fill="#f5a623"/><path d="M7 4v4" stroke="#fff" stroke-width="1.4"/><circle cx="7" cy="9.6" r="0.8" fill="#fff"/></svg>
<div style="position:absolute;left:436.5px;top:481.5px;line-height:12px;font-size:9px;color:#333;font-weight:normal;white-space:nowrap;">ZP-14/24</div>
<div style="position:absolute;left:567px;top:481.5px;line-height:12px;font-size:9px;color:#4a55d0;font-weight:normal;white-space:nowrap;">W2</div>
<div style="position:absolute;left:697.5px;top:481.5px;line-height:12px;font-size:9px;color:#333;font-weight:normal;white-space:nowrap;">Wyrób 2</div>
<div style="position:absolute;left:828px;top:481.5px;line-height:12px;font-size:9px;color:#333;font-weight:normal;white-space:nowrap;">PP1</div>
<div style="position:absolute;left:958.5px;top:481.5px;line-height:12px;font-size:9px;color:#333;font-weight:normal;white-space:nowrap;">pp1</div>
<div style="position:absolute;left:808px;width:400px;text-align:right;top:481.5px;line-height:12px;font-size:9px;color:#333;font-weight:normal;white-space:nowrap;">1</div>
<svg style="position:absolute;left:1232px;top:480.8px" width="6" height="12" viewBox="0 0 6 12" fill="#3a4de0"><circle cx="3.2" cy="2.3" r="1.35"/><circle cx="3.2" cy="6.1" r="1.35"/><circle cx="3.2" cy="9.9" r="1.35"/></svg>
<div style="position:absolute;left:21.8px;top:505.6px;width:10.4px;height:10.6px;box-sizing:border-box;border:1.3px solid #6f6f6f;border-radius:2.5px"></div>
<div style="position:absolute;left:45px;top:505.7px;line-height:12px;font-size:9.3px;color:#4f5ad6;font-weight:normal;white-space:nowrap;-webkit-text-stroke:0.25px #4f5ad6">10</div>
<div style="position:absolute;left:175.5px;top:505.7px;line-height:12px;font-size:9px;color:#333;font-weight:normal;white-space:nowrap;">Montaż</div>
<svg style="position:absolute;left:306px;top:504.3px" width="14.5" height="12.5" viewBox="0 0 14 12"><path d="M7 0.5L13.6 11.5H0.4z" fill="#f5a623"/><path d="M7 4v4" stroke="#fff" stroke-width="1.4"/><circle cx="7" cy="9.6" r="0.8" fill="#fff"/></svg>
<div style="position:absolute;left:436.5px;top:505.7px;line-height:12px;font-size:9px;color:#333;font-weight:normal;white-space:nowrap;">ZP-15/24</div>
<div style="position:absolute;left:567px;top:505.7px;line-height:12px;font-size:9px;color:#4a55d0;font-weight:normal;white-space:nowrap;">W1</div>
<div style="position:absolute;left:697.5px;top:505.7px;line-height:12px;font-size:9px;color:#333;font-weight:normal;white-space:nowrap;">Wyrób 1</div>
<div style="position:absolute;left:828px;top:505.7px;line-height:12px;font-size:9px;color:#333;font-weight:normal;white-space:nowrap;">W1</div>
<div style="position:absolute;left:958.5px;top:505.7px;line-height:12px;font-size:9px;color:#333;font-weight:normal;white-space:nowrap;">Wyrób 1</div>
<div style="position:absolute;left:808px;width:400px;text-align:right;top:505.7px;line-height:12px;font-size:9px;color:#333;font-weight:normal;white-space:nowrap;">1</div>
<svg style="position:absolute;left:1232px;top:505.0px" width="6" height="12" viewBox="0 0 6 12" fill="#3a4de0"><circle cx="3.2" cy="2.3" r="1.35"/><circle cx="3.2" cy="6.1" r="1.35"/><circle cx="3.2" cy="9.9" r="1.35"/></svg>
<div style="position:absolute;left:21.8px;top:529.6px;width:10.4px;height:10.6px;box-sizing:border-box;border:1.3px solid #6f6f6f;border-radius:2.5px"></div>
<div style="position:absolute;left:45px;top:529.7px;line-height:12px;font-size:9.3px;color:#4f5ad6;font-weight:normal;white-space:nowrap;-webkit-text-stroke:0.25px #4f5ad6">10</div>
<div style="position:absolute;left:175.5px;top:529.7px;line-height:12px;font-size:9px;color:#333;font-weight:normal;white-space:nowrap;">Przygotowanie</div>
<svg style="position:absolute;left:306px;top:528.3px" width="14.5" height="12.5" viewBox="0 0 14 12"><path d="M7 0.5L13.6 11.5H0.4z" fill="#f5a623"/><path d="M7 4v4" stroke="#fff" stroke-width="1.4"/><circle cx="7" cy="9.6" r="0.8" fill="#fff"/></svg>
<div style="position:absolute;left:436.5px;top:529.7px;line-height:12px;font-size:9px;color:#333;font-weight:normal;white-space:nowrap;">ZP-16/24</div>
<div style="position:absolute;left:567px;top:529.7px;line-height:12px;font-size:9px;color:#4a55d0;font-weight:normal;white-space:nowrap;">W2</div>
<div style="position:absolute;left:697.5px;top:529.7px;line-height:12px;font-size:9px;color:#333;font-weight:normal;white-space:nowrap;">Wyrób 2</div>
<div style="position:absolute;left:828px;top:529.7px;line-height:12px;font-size:9px;color:#333;font-weight:normal;white-space:nowrap;">PP1</div>
<div style="position:absolute;left:958.5px;top:529.7px;line-height:12px;font-size:9px;color:#333;font-weight:normal;white-space:nowrap;">pp1</div>
<div style="position:absolute;left:808px;width:400px;text-align:right;top:529.7px;line-height:12px;font-size:9px;color:#333;font-weight:normal;white-space:nowrap;">2</div>
<svg style="position:absolute;left:1232px;top:529.0px" width="6" height="12" viewBox="0 0 6 12" fill="#3a4de0"><circle cx="3.2" cy="2.3" r="1.35"/><circle cx="3.2" cy="6.1" r="1.35"/><circle cx="3.2" cy="9.9" r="1.35"/></svg>
<div style="position:absolute;left:1249.3px;top:425px;width:3.8px;height:114px;background:#c1c1c1"></div>
<div style="position:absolute;left:0px;top:539px;width:1264px;height:13px;background:#fff"></div>
<svg style="position:absolute;left:0;top:0" width="1264" height="552"><path d="M110.8 357.3L31 459" stroke="#f00" stroke-width="1.1"/><path d="M1192.5 259L1211.4 371.3" stroke="#f00" stroke-width="1.1"/></svg>
<div style="position:absolute;left:49.4px;top:269.4px;width:123.2px;height:88.4px;box-sizing:border-box;border:1.6px solid #ff0000;background:#fff;box-shadow:2px 2px 5px rgba(0,0,0,0.3)"></div>
<div style="position:absolute;left:-89.2px;width:400px;text-align:center;top:297.3px;line-height:16px;font-size:11.4px;color:#111;font-weight:bold;white-space:nowrap;">1. Zaznaczenie</div>
<div style="position:absolute;left:-89.2px;width:400px;text-align:center;top:313.2px;line-height:16px;font-size:11.4px;color:#111;font-weight:bold;white-space:nowrap;">operacji na liście</div>
<div style="position:absolute;left:1130.1px;top:171.1px;width:124px;height:88.6px;box-sizing:border-box;border:1.6px solid #ff0000;background:#fff;box-shadow:2px 2px 5px rgba(0,0,0,0.3)"></div>
<div style="position:absolute;left:992px;width:400px;text-align:center;top:191.2px;line-height:16px;font-size:11.4px;color:#111;font-weight:bold;white-space:nowrap;">2. Kliknięcie w</div>
<div style="position:absolute;left:992px;width:400px;text-align:center;top:207.1px;line-height:16px;font-size:11.4px;color:#111;font-weight:bold;white-space:nowrap;">funkcję: Pokaż</div>
<div style="position:absolute;left:992px;width:400px;text-align:center;top:223.0px;line-height:16px;font-size:11.4px;color:#111;font-weight:bold;white-space:nowrap;">operację</div>
<div style="position:absolute;left:16.2px;top:419.2px;width:101.4px;height:58.4px;box-sizing:border-box;border:2px solid #f00000"></div>
<div style="position:absolute;left:1160px;top:371px;width:102.3px;height:58.5px;box-sizing:border-box;border:2px solid #f00000"></div>
</body></html>
